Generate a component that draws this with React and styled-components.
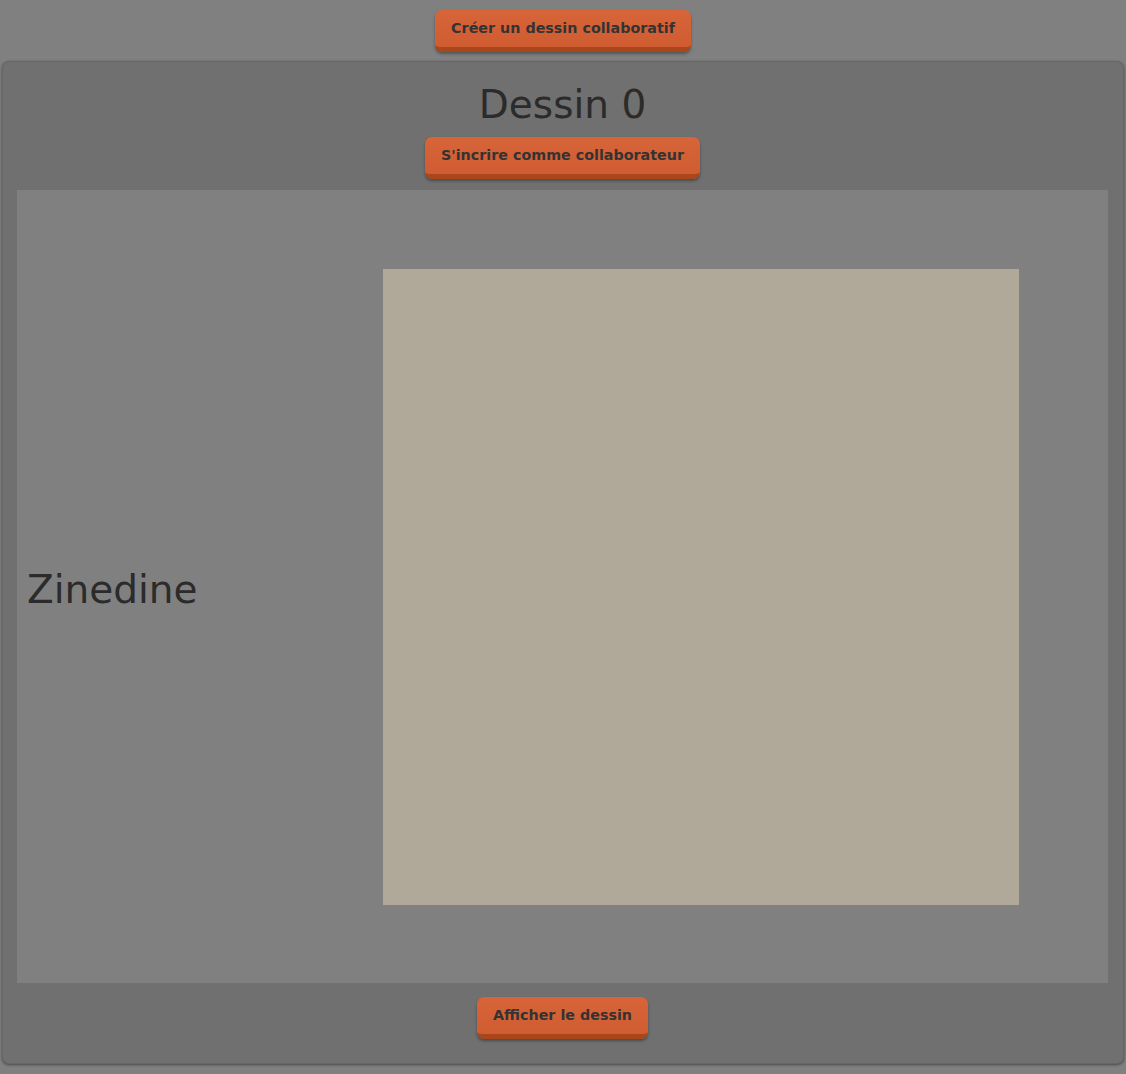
import React from "react";
import styled, { createGlobalStyle } from "styled-components";

const GlobalStyle = createGlobalStyle`
  html, body {
    margin: 0;
    padding: 0;
    background: #808080;
    font-family: "DejaVu Sans", sans-serif;
    color: #2b2b2b;
  }
`;

function App() {
  return (
    <>
      <GlobalStyle />
      <Page>
        <TopBar>
          <Button>Créer un dessin collaboratif</Button>
        </TopBar>
        <Panel>
          <Title>Dessin 0</Title>
          <Button>S'incrire comme collaborateur</Button>
          <Board>
            <Collaborators>
              <Name>Zinedine</Name>
            </Collaborators>
            <CanvasCell>
              <Canvas />
            </CanvasCell>
          </Board>
          <Button>Afficher le dessin</Button>
        </Panel>
      </Page>
    </>
  );
}

export default App;

const Page = styled.div`
  display: flex;
  flex-direction: column;
  align-items: stretch;
  padding: 10px 2px 10px 2px;
  gap: 9px;
`;

const TopBar = styled.div`
  display: flex;
  justify-content: center;
`;

const Button = styled.button`
  height: 42px;
  padding: 0 16px 2px;
  background: linear-gradient(#d8643a, #cf5d31);
  border: none;
  border-bottom: 5px solid #a9461b;
  border-radius: 7px;
  box-shadow: 0 2px 3px rgba(0, 0, 0, 0.35);
  color: #333;
  font-family: "DejaVu Sans", sans-serif;
  font-weight: bold;
  font-size: 14.3px;
  cursor: pointer;
`;

const Panel = styled.div`
  display: flex;
  flex-direction: column;
  align-items: center;
  background: #707070;
  border: 1px solid #666;
  border-radius: 7px;
  box-shadow: 0 1px 3px rgba(0, 0, 0, 0.45);
  padding: 0 15px 24px 14px;
`;

const Title = styled.h1`
  margin: 17px 0 7px;
  font-size: 39px;
  font-weight: normal;
  line-height: 51px;
  color: #2b2b2b;
`;

const Board = styled.div`
  align-self: stretch;
  display: flex;
  align-items: center;
  background: #808080;
  margin: 11px 0 14px;
  height: 793px;
`;

const Collaborators = styled.div`
  width: 366px;
  padding-left: 10px;
  box-sizing: border-box;
`;

const Name = styled.div`
  padding-top: 5px;
  font-size: 39px;
  color: #2b2b2b;
`;

const CanvasCell = styled.div`
  display: flex;
  align-items: center;
`;

const Canvas = styled.div`
  width: 636px;
  height: 636px;
  background: #b0a898;
`;
